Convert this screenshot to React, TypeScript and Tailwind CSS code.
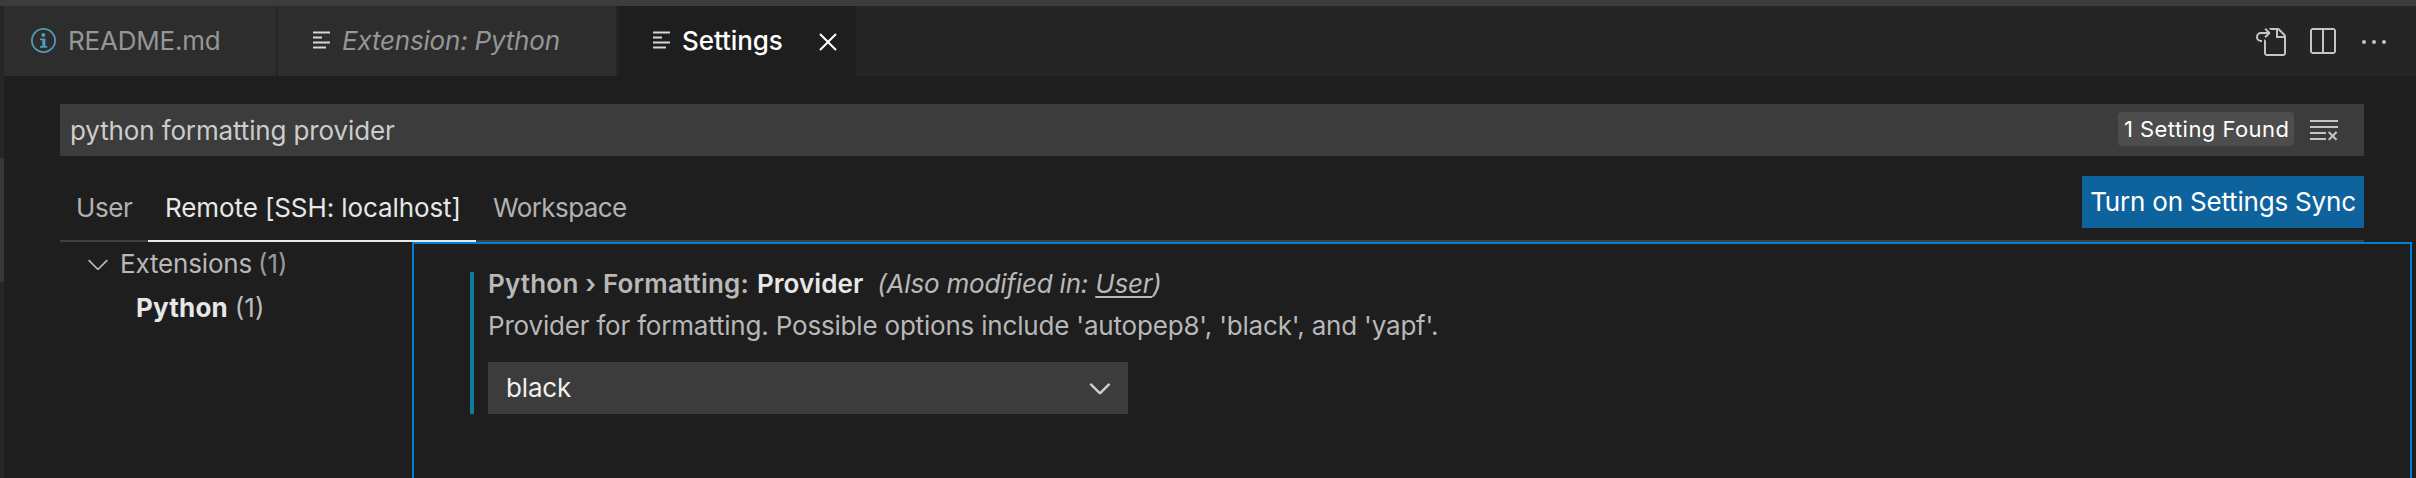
import type { ReactNode } from "react";
import {
  VscChevronDown,
  VscClearAll,
  VscClose,
  VscEllipsis,
  VscGoToFile,
  VscSplitHorizontal,
} from "react-icons/vsc";

function InfoIcon() {
  return (
    <svg className="size-[26px] shrink-0" viewBox="0 0 26 26" fill="none">
      <circle cx="12.5" cy="13.5" r="11.6" stroke="#519aba" strokeWidth="1.8" />
      <circle cx="12.3" cy="8" r="2" fill="#519aba" />
      <path d="M9 11.5h5.4v7.4h1.8v1.8H9v-1.8h2.2v-5.6H9z" fill="#519aba" />
    </svg>
  );
}

function FileLinesIcon() {
  return (
    <svg className="h-[18px] w-[17px] shrink-0" viewBox="0 0 17 18" fill="#d4d7d6">
      <path d="M0 .5h17v2H0zM0 5.5h9v2H0zM0 10.5h17v2H0zM0 15.5h13v2H0z" />
    </svg>
  );
}

function Tab({ className, children }: { className: string; children: ReactNode }) {
  return <div className={`flex shrink-0 ${className}`}>{children}</div>;
}

function TabBar() {
  return (
    <header className="flex h-[70px] bg-[#252526] text-[#969696]">
      <Tab className="mr-0.5 w-[272px] bg-[#2d2d2d] pt-[21px] pl-[27px]">
        <InfoIcon />
        <span className="ml-[11px] -mt-px tracking-[-0.2px]">README.md</span>
      </Tab>
      <Tab className="mr-0.5 w-[338px] bg-[#2d2d2d] pt-5 pl-[35px]">
        <span className="pt-[5px]">
          <FileLinesIcon />
        </span>
        <span className="ml-3 italic tracking-[-0.2px]">Extension: Python</span>
      </Tab>
      <Tab className="w-[238px] bg-[#1e1e1e] pt-5 pl-[35px] text-white">
        <span className="pt-[5px]">
          <FileLinesIcon />
        </span>
        <span className="ml-3 w-[130px] font-medium tracking-[-0.09px]">Settings</span>
        <VscClose className="size-8 shrink-0" />
      </Tab>
      <div className="ml-auto flex gap-5 pt-5 pr-[26px] text-[#c5c5c5]">
        <VscGoToFile className="size-8" />
        <VscSplitHorizontal className="size-8" />
        <VscEllipsis className="size-8" />
      </div>
    </header>
  );
}

function SearchBox() {
  return (
    <div className="mt-7 mr-[52px] ml-14 flex h-[52px] items-start bg-[#3c3c3c] text-[#cccccc]">
      <span className="mt-3 ml-[10px] tracking-[-0.128px]">python formatting provider</span>
      <div className="mt-2 ml-auto flex h-[34px] w-[176px] items-center rounded-[4px] bg-[#4d4d4d] pl-1.5 text-[22px] tracking-[0.446px] text-white">
        1 Setting Found
      </div>
      <VscClearAll className="mt-[10px] mr-6 ml-3.5 size-8 text-[#c5c5c5]" />
    </div>
  );
}

function ScopeTabs() {
  return (
    <div className="mr-[52px] ml-14 flex h-[86px] border-b-2 border-[#414141] text-[#b2b2b2]">
      <span className="w-[88px] pt-[37px] pl-4 tracking-[-0.41px]">User</span>
      <span className="-mb-0.5 w-[328px] border-b-2 border-[#e7e7e7] pt-[37px] pl-[17px] tracking-[-0.1px] text-[#e7e7e7]">
        Remote [SSH: localhost]
      </span>
      <span className="pt-[37px] pl-[17px] tracking-[-0.588px]">Workspace</span>
      <button className="mt-5 ml-auto flex h-[52px] w-[282px] items-center justify-center bg-[#0e639c] tracking-[-0.194px] text-white">
        Turn on Settings Sync
      </button>
    </div>
  );
}

function Outline() {
  return (
    <nav className="w-[408px] shrink-0 pt-[7px]">
      <div className="flex h-11 text-[#b8b8b8]">
        <VscChevronDown className="-mt-px ml-[78px] size-8" />
        <span className="ml-[6px] tracking-[-0.175px]">Extensions</span>
        <span className="ml-[6px] text-[#999999]">(1)</span>
      </div>
      <div className="flex pl-[132px] text-[#e7e7e7]">
        <span className="font-bold tracking-[0.168px]">Python</span>
        <span className="ml-[7px] text-[#bcbcbc]">(1)</span>
      </div>
    </nav>
  );
}

function SettingItem() {
  return (
    <section className="h-[236px] w-[2000px] border-2 border-b-0 border-[#007fd4] pt-7 pl-14">
      <div className="flex h-[142px] flex-col border-l-4 border-[#0c7d9d] pl-3.5 text-[#b8b8b8]">
        <div className="-mt-[3px] flex h-[42px] shrink-0">
          <span className="font-semibold tracking-[0.18px]">Python › Formatting:</span>
          <span className="ml-[8px] font-semibold tracking-[0.067px] text-[#e7e7e7]">Provider</span>
          <span className="ml-[14px] italic tracking-[-0.195px]">
            (Also modified in: <span className="underline decoration-2 underline-offset-3">User</span>)
          </span>
        </div>
        <p className="h-[51px] shrink-0 tracking-[-0.191px]">
          Provider for formatting. Possible options include 'autopep8', 'black', and 'yapf'.
        </p>
        <div className="flex h-[52px] w-[640px] shrink-0 items-start bg-[#3c3c3c] pr-3 text-[#f0f0f0]">
          <span className="mt-[11px] ml-[18px] tracking-[-0.167px]">black</span>
          <VscChevronDown className="mt-2.5 ml-auto size-8 stroke-[0.4] text-[#d4d4d4]" />
        </div>
      </div>
    </section>
  );
}

export default function App() {
  return (
    <div className="flex h-[478px] w-[2416px] flex-col overflow-hidden bg-[#1e1e1e] font-['Inter',sans-serif] text-[26px] leading-[30px] whitespace-pre">
      <div className="h-1.5 shrink-0 bg-[#3c3c3c]" />
      <div className="flex min-h-0 flex-1">
        <aside className="w-1 shrink-0 bg-[#252526] pt-[152px]">
          <div className="h-[124px] bg-[#37373d]" />
        </aside>
        <main className="min-w-0 flex-1">
          <TabBar />
          <SearchBox />
          <ScopeTabs />
          <div className="flex">
            <Outline />
            <SettingItem />
          </div>
        </main>
      </div>
    </div>
  );
}
